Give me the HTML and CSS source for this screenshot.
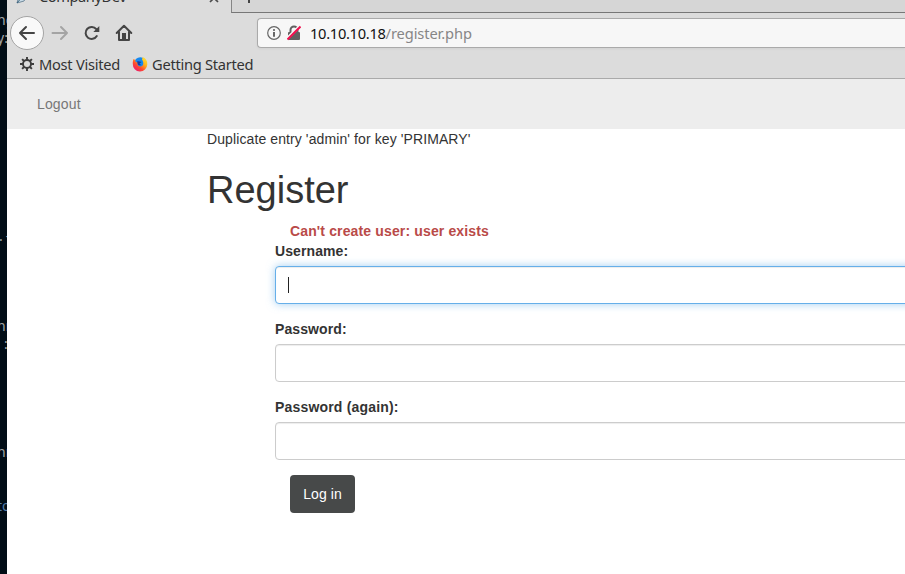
FILE: index.html
```html
<!DOCTYPE html>
<html lang="en">
<head>
<meta charset="utf-8">
<title>CompanyDev</title>
<link rel="stylesheet" href="styles.css">
</head>
<body>
<div class="desktop">
<aside class="terminal">
<div class="line">ng</div>
<div class="line">y:</div>
<div class="line gap-10 dot">.-</div>
<div class="line gap-4">nn</div>
<div class="line indent">:</div>
<div class="line gap-5">nn</div>
<div class="line gap-2 blue">to</div>
</aside>
<div class="window">
<header class="tabs">
<div class="tab">
<svg class="favicon" width="12" height="14" viewBox="0 0 12 14"><path d="M1 12L3 5 10 0 11 5 8 10Z" fill="#c9dce8" stroke="#71899a"/><path d="M1 12L7 5" stroke="#3b647e"/></svg>
<span class="tab-title">CompanyDev</span>
<svg class="close" width="10" height="10" viewBox="0 0 10 10"><path d="M1 1L9 9M9 1L1 9" stroke="#4c4c4c" stroke-width="1.7"/></svg>
</div>
<div class="new-tab"><svg width="12" height="12" viewBox="0 0 12 12"><path d="M6 0V12M0 6H12" stroke="#444" stroke-width="2"/></svg></div>
</header>
<div class="toolbar">
<div class="back"><svg width="18" height="18" viewBox="0 0 18 18"><path d="M16 9H2M8 3L2 9L8 15" fill="none" stroke="#454545" stroke-width="2" stroke-linecap="round" stroke-linejoin="round"/></svg></div>
<svg class="forward" width="18" height="18" viewBox="0 0 18 18"><path d="M1.500 9H16M10 3L16 9L10 15" fill="none" stroke="#a4a4a4" stroke-width="2" stroke-linecap="round" stroke-linejoin="round"/></svg>
<svg class="reload" width="16" height="16" viewBox="0 0 16 16"><path d="M12.300 4.200A6 6 0 1 0 12.800 11" fill="none" stroke="#454545" stroke-width="2" stroke-linecap="round"/><path d="M15.300 1V7H9.300Z" fill="#454545"/></svg>
<svg class="home" width="18" height="18" viewBox="0 0 18 18"><path d="M1.700 9L9 1.800L16.300 9M4 8V16H14V8" fill="none" stroke="#454545" stroke-width="2" stroke-linecap="round" stroke-linejoin="round"/><path d="M7 9H11V15H7Z" fill="#454545"/></svg>
<div class="address">
<svg width="14" height="14" viewBox="0 0 14 14"><circle cx="7" cy="7" r="6.300" fill="none" stroke="#666" stroke-width="1.200"/><path d="M7 6V10.800" stroke="#555" stroke-width="1.800"/><circle cx="7" cy="3.900" r="1" fill="#555"/></svg>
<svg class="lock" width="14" height="16" viewBox="0 0 14 16"><path d="M3.500 8V5A3.500 3.500 0 0 1 10.500 5V8" fill="none" stroke="#606060" stroke-width="2"/><rect x="1" y="7" width="12" height="8" rx="1" fill="#606060"/><path d="M0 13.500L13 1" stroke="#f7f7f7" stroke-width="3"/><path d="M.5 14.500L13.500 1.500" stroke="#f0104f" stroke-width="2"/></svg>
<span class="url"><b>10.10.10.18</b>/register.php</span>
</div>
</div>
<nav class="bookmarks">
<svg class="gear" width="14" height="14" viewBox="0 0 14 14"><circle cx="7" cy="7" r="4" fill="none" stroke="#3c3c3c" stroke-width="1.900"/><path d="M7 0V3M7 11V14M0 7H3M11 7H14M2.100 2.100L4 4M10 10L11.900 11.900M11.900 2.100L10 4M4 10L2.100 11.900" stroke="#3c3c3c" stroke-width="1.900"/></svg>
<span class="visited">Most Visited</span>
<svg class="firefox" width="16" height="16" viewBox="0 0 16 16"><defs><linearGradient id="fire" x1="1" y1="0" x2="0.200" y2="1"><stop offset="0" stop-color="#fff044"/><stop offset=".4" stop-color="#ffb51b"/><stop offset=".7" stop-color="#ff492e"/><stop offset="1" stop-color="#e71778"/></linearGradient></defs><circle cx="8.300" cy="7.500" r="6.200" fill="#1688ee"/><path d="M1.500 3L3.400 4.100C2.900 6 4.500 6.400 6 6.500L5.500 8.200C6.500 11 10 11 11 8.800C11.700 7 11 5 10 3.500L10.700 1C14 2.500 15.500 5 15.300 8.500A7.200 7.200 0 0 1 .8 8C.7 6 1 4 1.500 3Z" fill="url(#fire)"/><path d="M5 5.500C6.500 4.800 8 5.700 9.500 6L7.500 7.500L9 9C7.500 9.800 5.500 9 5.500 7Z" fill="#173c9c"/></svg>
<span>Getting Started</span>
</nav>
<main class="page">
<nav class="navbar"><a>Logout</a></nav>
<div class="container">
<p class="message">Duplicate entry 'admin' for key 'PRIMARY'</p>
<h1>Register</h1>
<form>
<p class="error">Can't create user: user exists</p>
<label for="username">Username:</label>
<div class="field focused" id="username"><span class="caret"></span></div>
<label for="password">Password:</label>
<input class="field" id="password" type="password">
<label for="again" class="wide">Password (again):</label>
<input class="field" id="again" type="password">
<button type="button">Log in</button>
</form>
</div>
</main>
</div>
</div>
</body>
</html>
```
FILE: styles.css
```css
* { box-sizing: border-box; }
body { margin: 0; overflow: hidden; }
svg { display: block; flex: none; }
.desktop { display: flex; width: 905px; height: 574px; overflow: hidden; background: #fff; }
.terminal { width: 7px; flex: none; overflow: hidden; padding-top: 11px; background: #010d16; color: #a3a7a9; font: 14px/18px "Noto Sans", sans-serif; }
.line { height: 18px; margin-left: -3px; white-space: nowrap; }
.gap-10 { margin-top: 180px; }
.gap-4 { margin-top: 72px; }
.gap-5 { margin-top: 90px; }
.gap-2 { margin-top: 36px; }
.dot { margin-left: -1px; letter-spacing: 3px; }
.indent { margin-left: 4px; }
.blue { color: #527ba9; }
.window { flex: 1; min-width: 0; background: #fff; }
.tabs { display: flex; height: 13px; overflow: hidden; background: #dcdcdc; font: 14.67px/20px "Noto Sans", sans-serif; letter-spacing: -.45px; color: #333; }
.tab { display: flex; width: 224px; flex: none; }
.favicon { margin: -9px 0 0 9px; }
.tab-title { width: 162px; margin: -14px 0 0 11px; }
.close { margin: -7px 0 0 8px; }
.new-tab { flex: 1; padding-left: 11px; border-left: 1px solid #858585; border-bottom: 1px solid #777; background: #d6d6d6; }
.new-tab svg { margin-top: -9px; }
.toolbar { display: flex; align-items: center; height: 40px; padding-left: 3px; background: #dcdcdc; }
.back { display: grid; place-items: center; width: 34px; height: 34px; flex: none; border: 1px solid #a4a4a4; border-radius: 50%; background: #f9f9f9; }
.forward { margin-left: 7px; }
.reload { margin-left: 15px; }
.home { margin-left: 15px; }
.address { display: flex; align-items: center; flex: 1; height: 30px; margin-left: 124px; padding-left: 9px; border: 1px solid #aaa; border-right: 0; border-radius: 4px 0 0 4px; background: #f7f7f7; box-shadow: 0 1px 3px #0000000d; }
.lock { margin-left: 6px; }
.url { margin-left: 9px; font: 14.67px/20px "Noto Sans", sans-serif; letter-spacing: -.1px; color: #868686; white-space: nowrap; }
.url b { color: #111; font-weight: 400; letter-spacing: -.3px; }
.bookmarks { display: flex; align-items: center; height: 26px; padding: 0 0 3px 13px; border-bottom: 1px solid #aaa; background: #dcdcdc; color: #333; font: 14.67px/20px "Noto Sans", sans-serif; letter-spacing: -.27px; white-space: nowrap; }
.bookmarks span { margin-top: -1px; }
.bookmarks .visited { width: 81px; margin: -1px 12px 0 5px; }
.firefox { margin-right: 4px; }
.page { font: 14px/20px "Liberation Sans", Arial, sans-serif; color: #333; }
.navbar { height: 50px; padding: 15px 30px; background: #ededed; color: #777; letter-spacing: .15px; }
.container { width: 1170px; padding-left: 200px; }
.message { margin: 0; letter-spacing: .1px; }
h1 { margin: 20px 0 10px; font-size: 38px; line-height: 42px; font-weight: 500; }
form { width: 900px; margin-left: 68px; }
.error { margin: 0; padding-left: 15px; color: #b94a48; font-weight: 700; letter-spacing: .14px; }
label { display: block; margin-bottom: 5px; font-weight: 700; letter-spacing: .1px; }
.wide { letter-spacing: .18px; }
.field { display: block; width: 100%; height: 38px; margin: 0 0 15px; padding: 10px 12px; border: 1px solid #ccc; border-radius: 4px; background: #fff; box-shadow: inset 0 1px 1px #00000013; }
.focused { border-color: #66afe9; box-shadow: inset 0 1px 1px #00000013, 0 0 8px #66afe999; }
.caret { display: block; width: 1px; height: 16px; background: #222; }
button { display: block; width: 65px; height: 38px; margin-left: 15px; padding: 0; border: 0; border-radius: 4px; background: #474949; color: #fff; font: 14px/20px "Liberation Sans", Arial, sans-serif; letter-spacing: .1px; }
```
